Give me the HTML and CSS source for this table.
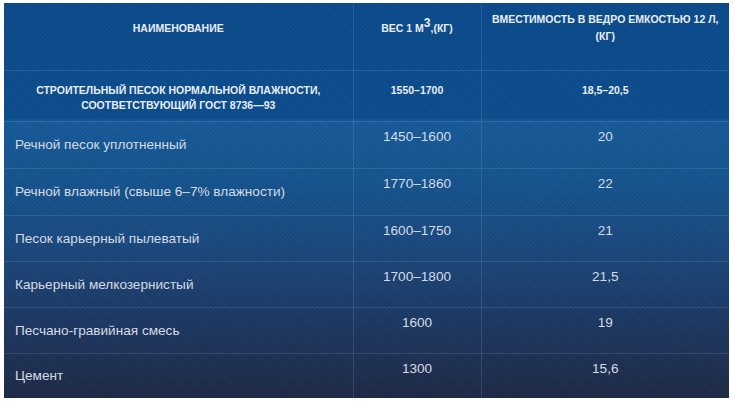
FILE: index.html
```html
<!DOCTYPE html>
<html lang="ru">
<head>
<meta charset="utf-8">
<title>Вес песка</title>
<link rel="stylesheet" href="styles.css">
</head>
<body>
<div class="wrap">
<table class="sand">
<colgroup>
<col class="c1"><col class="c2"><col class="c3">
</colgroup>
<thead>
<tr class="head">
<th>НАИМЕНОВАНИЕ</th>
<th>ВЕС 1 М<sup>3</sup>,(КГ)</th>
<th>ВМЕСТИМОСТЬ В ВЕДРО ЕМКОСТЬЮ 12 Л,<br>(КГ)</th>
</tr>
</thead>
<tbody>
<tr class="lead">
<td class="name">СТРОИТЕЛЬНЫЙ ПЕСОК НОРМАЛЬНОЙ ВЛАЖНОСТИ,<br>СООТВЕТСТВУЮЩИЙ ГОСТ 8736—93</td>
<td class="val">1550–1700</td>
<td class="val">18,5–20,5</td>
</tr>
<tr class="r47">
<td class="name">Речной песок уплотненный</td>
<td class="val">1450–1600</td>
<td class="val">20</td>
</tr>
<tr class="r47">
<td class="name">Речной влажный (свыше 6–7% влажности)</td>
<td class="val">1770–1860</td>
<td class="val">22</td>
</tr>
<tr class="r46">
<td class="name">Песок карьерный пылеватый</td>
<td class="val">1600–1750</td>
<td class="val">21</td>
</tr>
<tr class="r46">
<td class="name">Карьерный мелкозернистый</td>
<td class="val">1700–1800</td>
<td class="val">21,5</td>
</tr>
<tr class="r46">
<td class="name">Песчано-гравийная смесь</td>
<td class="val">1600</td>
<td class="val">19</td>
</tr>
<tr class="r45">
<td class="name">Цемент</td>
<td class="val">1300</td>
<td class="val">15,6</td>
</tr>
</tbody>
</table>
</div>
</body>
</html>
```
FILE: styles.css
```css
html, body {
  margin: 0;
  padding: 0;
  background: #ffffff;
}
.wrap {
  padding: 3px 0 0 4px;
}
.sand {
  width: 725px;
  table-layout: fixed;
  border-collapse: collapse;
  font-family: "Liberation Sans", Arial, sans-serif;
  color: #d5dbe4;
  background-color: #16508c;
  background-image:
    repeating-linear-gradient(45deg, rgba(255,255,255,0.025) 0 1px, transparent 1px 3px),
    repeating-linear-gradient(-45deg, rgba(0,0,0,0.05) 0 1px, transparent 1px 3px),
    linear-gradient(to bottom, #0b4b8c 0%, #0c4d8e 29%, #175a99 30%, #15548f 45%, #1a4a80 60%, #1c3d6b 75%, #1d3258 88%, #1e2a45 100%);
}
.c1 { width: 349px; }
.c2 { width: 128px; }
.c3 { width: 248px; }
.sand th, .sand td {
  border: 1px solid rgba(150, 185, 225, 0.18);
  padding: 0 6px;
  line-height: 15px;
}
.sand tr:first-child th { border-top: none; }
.sand th:first-child, .sand td:first-child { border-left: none; }
.sand th:last-child, .sand td:last-child { border-right: none; }
.sand tbody tr:last-child td { border-bottom: none; }

.head { height: 67px; }
.head th {
  font-size: 10.5px;
  font-weight: bold;
  color: #e9eef5;
  text-align: center;
  vertical-align: middle;
  padding-bottom: 16px;
  line-height: 17px;
}
.head sup {
  font-size: 1.15em;
  line-height: 0;
  vertical-align: 0.45em;
}
.lead { height: 51px; }
.lead td {
  font-size: 10.5px;
  font-weight: bold;
  color: #e9eef5;
  text-align: center;
  vertical-align: top;
  padding-top: 12px;
}
.r47 { height: 47px; }
.r46 { height: 46px; }
.r45 { height: 45px; }
tbody tr:not(.lead) td {
  font-size: 13.6px;
}
tbody tr:not(.lead) .name {
  padding-left: 11px;
  vertical-align: middle;
}
tbody tr:not(.lead) .val {
  text-align: center;
  vertical-align: top;
  padding-top: 7px;
}
```
